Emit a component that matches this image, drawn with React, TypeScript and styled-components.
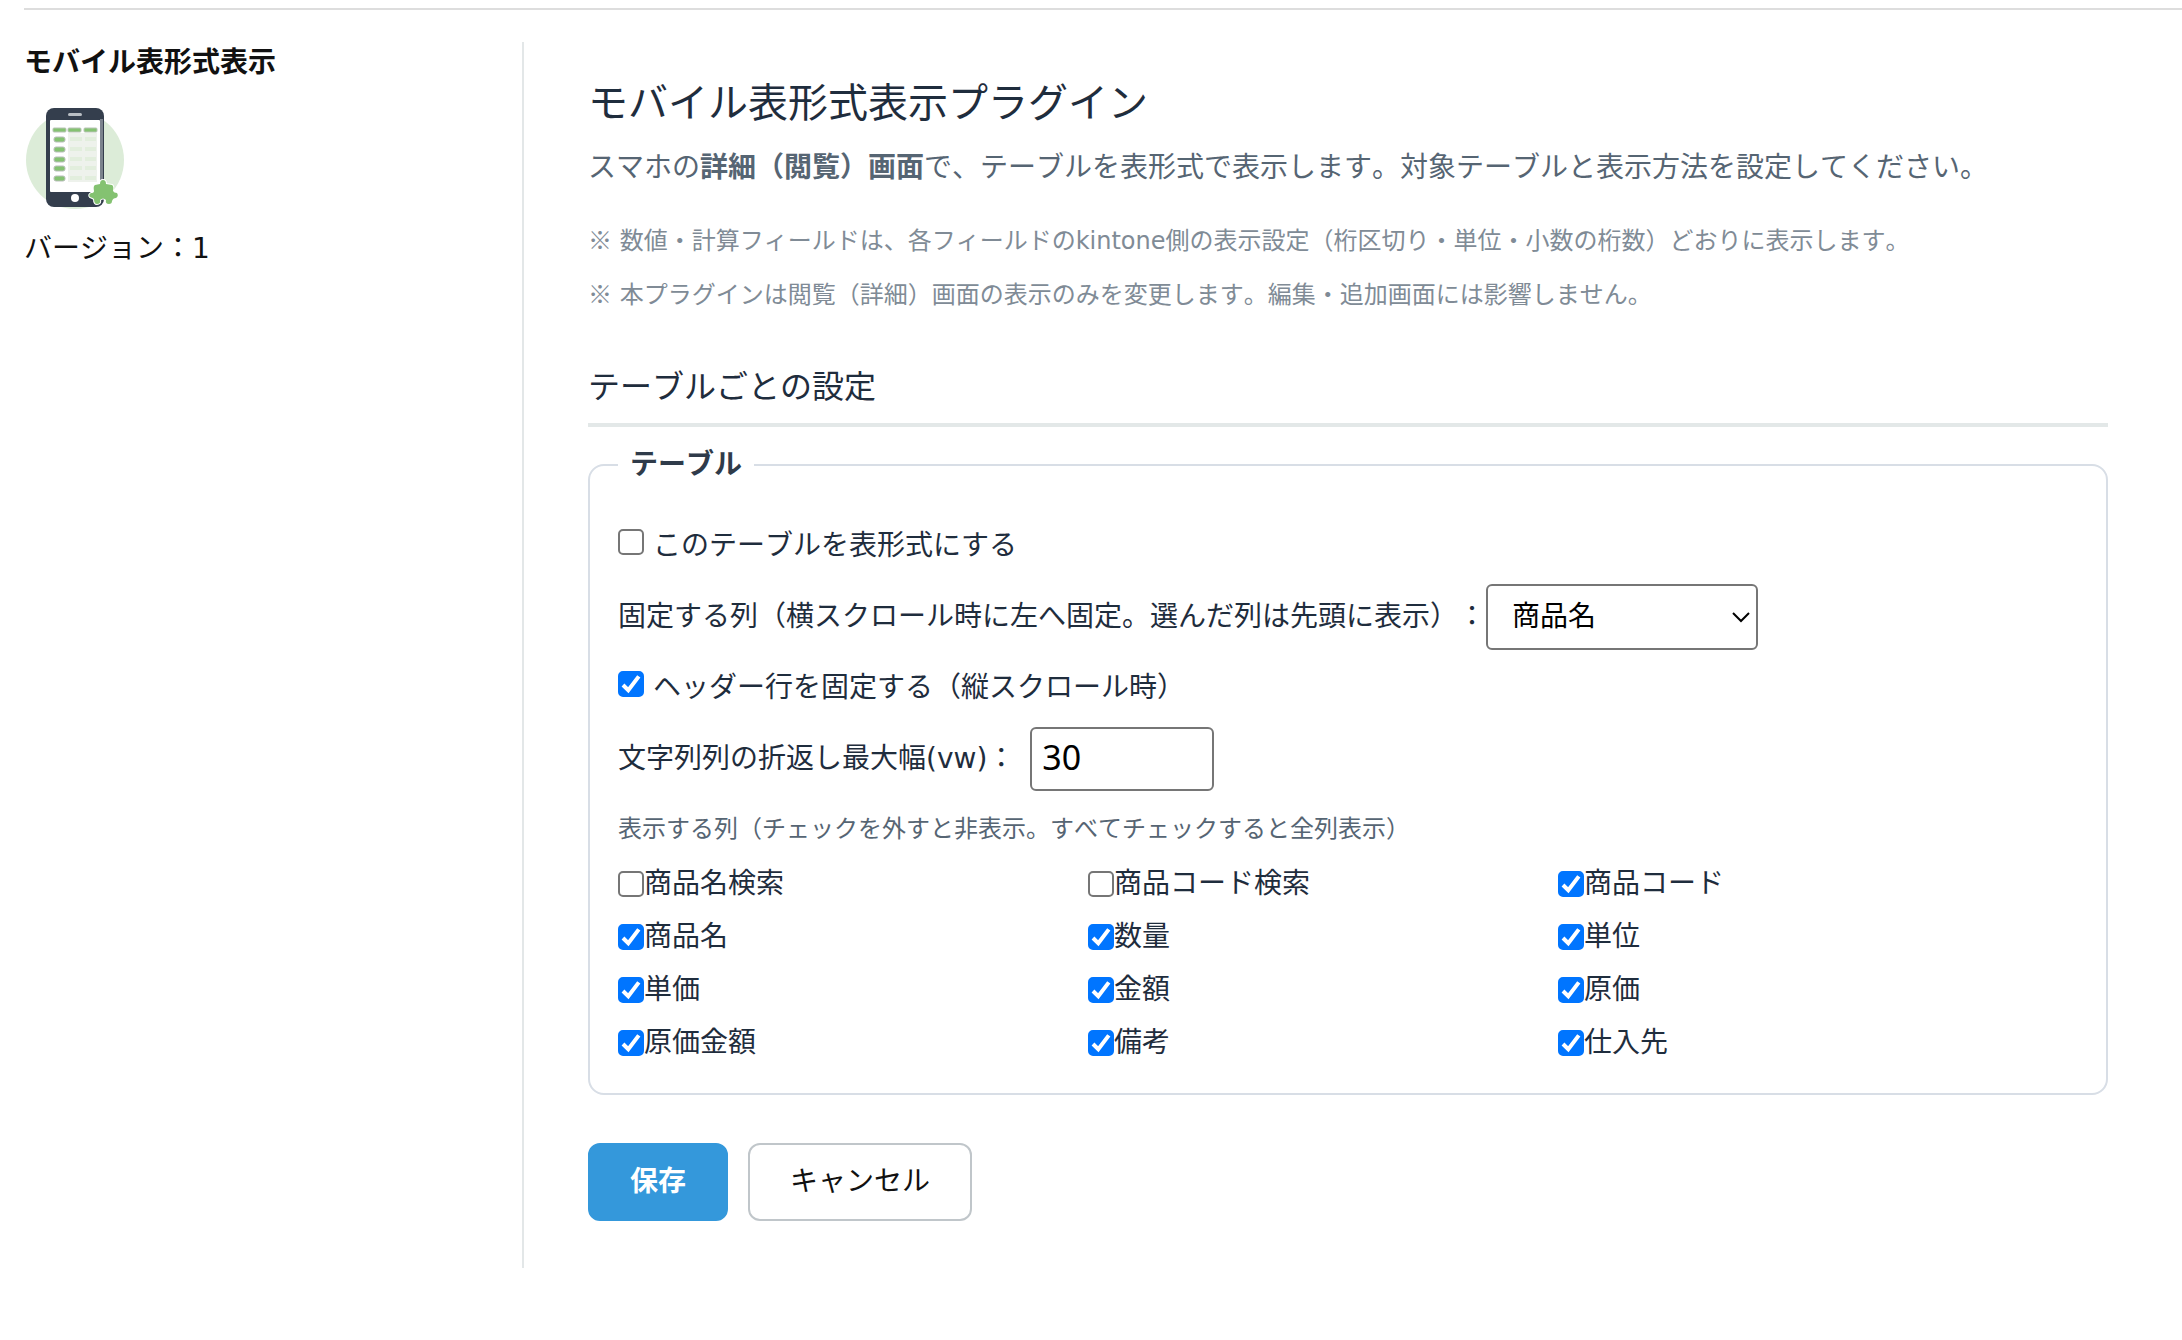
import React from 'react';
import styled, { createGlobalStyle } from 'styled-components';

const GlobalStyle = createGlobalStyle`
  *, *::before, *::after {
    box-sizing: border-box;
  }
  body {
    margin: 0;
    background: #fff;
    color: #111;
    font-family: "DejaVu Sans", "Noto Sans CJK JP", sans-serif;
    font-size: 28px;
    font-kerning: none;
    line-height: 40px;
    text-spacing-trim: space-all;
  }
`;

const Page = styled.div`
  padding: 8px 0 72px 24px;
`;

const Columns = styled.div`
  display: flex;
  margin-top: 32px;
`;

const TopRule = styled.hr`
  height: 2px;
  margin: 0;
  border: 0;
  background: #ddd;
`;

const Sidebar = styled.aside`
  flex: 0 0 500px;
  padding-top: 1px;
  border-right: 2px solid #e3e7e8;
`;

const PluginName = styled.h2`
  margin: 0 0 18px;
  font-size: 28px;
  font-weight: 700;
`;

const PluginIcon = styled.svg`
  display: block;
  width: 112px;
  height: 112px;
  margin-bottom: 16px;
`;

const Version = styled.p`
  margin: 0;
`;

const Main = styled.main`
  flex: 1;
  min-width: 0;
  padding: 31px 74px 47px 64px;
  color: #1f2d3d;
`;

const Title = styled.h1`
  margin: 0 0 15px;
  font-size: 40px;
  font-weight: 400;
  line-height: 60px;
`;

const Lead = styled.p`
  margin: 0 0 33px;
  color: #566573;
`;

const Note = styled.p`
  margin: 0 0 14px;
  color: #808b96;
  font-size: 24px;
`;

const NoteMark = styled.span`
  font-family: "Noto Sans CJK JP", sans-serif;
  line-height: 1;
`;

const SectionTitle = styled.h2`
  margin: 48px 0 18px;
  padding-bottom: 12px;
  border-bottom: 4px solid #e3e8e8;
  font-size: 32px;
  font-weight: 400;
  line-height: 48px;
`;

const Group = styled.fieldset`
  min-width: 0;
  margin: 0;
  padding: 28px 28px 30px;
  border: 2px solid #d8dee6;
  border-radius: 16px;
`;

const Legend = styled.legend`
  padding: 0 12px;
  color: #2f3b4a;
  font-weight: 700;
`;

const Row = styled.div`
  display: flex;
  align-items: center;
  min-height: 66px;
  margin-bottom: 5px;
`;

const CheckLabel = styled.label`
  display: flex;
  align-items: center;
`;

const Check = styled.input`
  appearance: none;
  flex: none;
  width: 26px;
  height: 26px;
  margin: 0;
  border: 2px solid #767676;
  border-radius: 5px;
  background: #fff;

  &:checked {
    border-color: #0075ff;
    background: #0075ff
      url("data:image/svg+xml,%3Csvg xmlns='http://www.w3.org/2000/svg' viewBox='0 0 26 26'%3E%3Cpath d='M5 14 10.3 19.2 20.8 5.4' fill='none' stroke='white' stroke-width='4'/%3E%3C/svg%3E")
      center / 26px 26px no-repeat;
  }
`;

const OptionLabel = styled(CheckLabel)`
  align-items: flex-start;
  gap: 9px;

  ${Check} {
    margin-top: 3px;
  }
`;

const Select = styled.select`
  appearance: none;
  width: 272px;
  height: 66px;
  padding: 0 24px;
  border: 2px solid #767676;
  border-radius: 6px;
  background: #fff
    url("data:image/svg+xml,%3Csvg xmlns='http://www.w3.org/2000/svg' viewBox='0 0 20 12'%3E%3Cpath d='M2 2 10 10 18 2' fill='none' stroke='black' stroke-width='2'/%3E%3C/svg%3E")
    right 5px center / 20px 12px no-repeat;
  color: #000;
  font: inherit;
`;

const NumberBox = styled.input`
  width: 184px;
  height: 64px;
  margin-left: 15px;
  padding: 0 10px 4px;
  border: 2px solid #767676;
  border-radius: 6px;
  background: #fff;
  color: #000;
  font-family: "Noto Sans", sans-serif;
  font-size: 34px;
`;

const Hint = styled.p`
  margin: 17px 0 15px;
  color: #566573;
  font-size: 24px;
`;

const FieldGrid = styled.div`
  display: grid;
  grid-template-columns: repeat(3, 1fr);
  gap: 13px 10px;
  max-width: 1400px;
`;

const Actions = styled.div`
  display: flex;
  gap: 20px;
  margin-top: 48px;
`;

const Button = styled.button<{ $primary?: boolean }>`
  height: 78px;
  padding: 0 40px;
  border: 2px solid ${({ $primary }) => ($primary ? '#3498db' : '#c0c6ca')};
  border-radius: 12px;
  background: ${({ $primary }) => ($primary ? '#3498db' : '#fff')};
  color: ${({ $primary }) => ($primary ? '#fff' : '#111')};
  font: inherit;
  font-kerning: none;
  font-weight: ${({ $primary }) => ($primary ? 700 : 400)};
`;

const fields = [
  { name: '商品名検索', shown: false },
  { name: '商品コード検索', shown: false },
  { name: '商品コード', shown: true },
  { name: '商品名', shown: true },
  { name: '数量', shown: true },
  { name: '単位', shown: true },
  { name: '単価', shown: true },
  { name: '金額', shown: true },
  { name: '原価', shown: true },
  { name: '原価金額', shown: true },
  { name: '備考', shown: true },
  { name: '仕入先', shown: true },
];

const rowYs = [36, 46, 56, 65, 75];

function PhoneIcon() {
  return (
    <PluginIcon viewBox="0 0 112 112" aria-hidden="true">
      <circle cx="51" cy="59" r="49" fill="#dcecd8" />
      <rect x="22" y="7" width="58" height="99" rx="8" fill="#343e4d" />
      <rect x="76" y="18" width="3" height="74" fill="#7b838d" />
      <rect x="26" y="19" width="50" height="72" rx="1" fill="#fff" />
      <rect x="44" y="12" width="14" height="3" rx="1.5" fill="#b9bec3" />
      <circle cx="51" cy="97" r="4" fill="#fff" />
      <rect x="44" y="32" width="29" height="49" fill="#eef2ec" />
      {[29, 44, 60].map((x) => (
        <rect key={x} x={x} y="27" width="13" height="4" rx="1" fill="#84c271" stroke="#b9c4b7" />
      ))}
      {rowYs.map((y) => (
        <g key={y}>
          <rect x="30" y={y} width="11" height="5" rx="2" fill="#84c271" stroke="#b9bfbb" />
          <rect x="46" y={y} width="12" height="4" fill="#e2eedd" />
          <rect x="61" y={y} width="11" height="4" fill="#e2eedd" />
        </g>
      ))}
      <path
        d="M79 79Q82 79 82 83L88 84Q90 85 89 90Q90 92 93 92Q95 95 92 97Q89 97 88 100Q88 103 85 103Q81 103 82 99Q79 96 76 99Q77 103 73 103Q70 103 70 98Q69 97 66 96Q64 94 67 92Q70 92 70 90Q69 85 71 84L76 83Q76 79 79 79Z"
        fill="#84c271"
        stroke="#fff"
        strokeWidth="2"
        strokeLinejoin="round"
        paintOrder="stroke"
      />
    </PluginIcon>
  );
}

export default function App() {
  return (
    <>
      <GlobalStyle />
      <Page>
        <TopRule />
        <Columns>
          <Sidebar>
            <PluginName>モバイル表形式表示</PluginName>
            <PhoneIcon />
            <Version>バージョン：1</Version>
          </Sidebar>
          <Main>
            <Title>モバイル表形式表示プラグイン</Title>
            <Lead>
              スマホの<strong>詳細（閲覧）画面</strong>
              で、テーブルを表形式で表示します。対象テーブルと表示方法を設定してください。
            </Lead>
            <Note>
              <NoteMark>※</NoteMark>{' '}
              数値・計算フィールドは、各フィールドのkintone側の表示設定（桁区切り・単位・小数の桁数）どおりに表示します。
            </Note>
            <Note>
              <NoteMark>※</NoteMark>{' '}
              本プラグインは閲覧（詳細）画面の表示のみを変更します。編集・追加画面には影響しません。
            </Note>
            <SectionTitle>テーブルごとの設定</SectionTitle>
            <Group>
              <Legend>テーブル</Legend>
              <Row>
                <OptionLabel>
                  <Check type="checkbox" />
                  このテーブルを表形式にする
                </OptionLabel>
              </Row>
              <Row>
                <label htmlFor="fixed-column">固定する列（横スクロール時に左へ固定。選んだ列は先頭に表示）：</label>
                <Select id="fixed-column" defaultValue="商品名">
                  {fields.map(({ name }) => (
                    <option key={name}>{name}</option>
                  ))}
                </Select>
              </Row>
              <Row>
                <OptionLabel>
                  <Check type="checkbox" defaultChecked />
                  ヘッダー行を固定する（縦スクロール時）
                </OptionLabel>
              </Row>
              <Row>
                <label htmlFor="wrap-width">文字列列の折返し最大幅(vw)：</label>
                <NumberBox id="wrap-width" inputMode="numeric" defaultValue="30" />
              </Row>
              <Hint>表示する列（チェックを外すと非表示。すべてチェックすると全列表示）</Hint>
              <FieldGrid>
                {fields.map(({ name, shown }) => (
                  <CheckLabel key={name}>
                    <Check type="checkbox" defaultChecked={shown} />
                    {name}
                  </CheckLabel>
                ))}
              </FieldGrid>
            </Group>
            <Actions>
              <Button type="button" $primary>
                保存
              </Button>
              <Button type="button">キャンセル</Button>
            </Actions>
          </Main>
        </Columns>
      </Page>
    </>
  );
}
